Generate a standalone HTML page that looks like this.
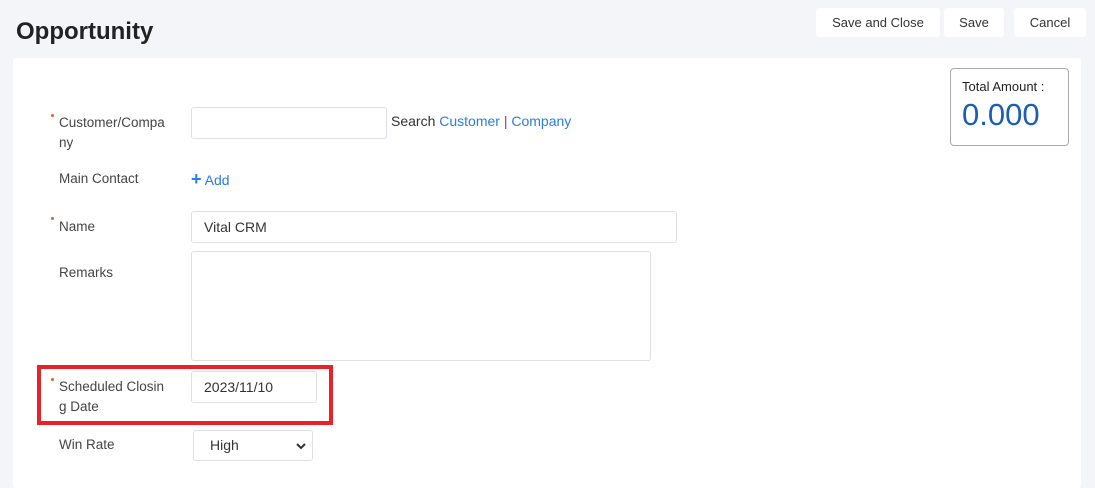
<!DOCTYPE html>
<html><head><style>
body{margin:0;width:1095px;height:474px;background:#f4f5f9;font-family:"Liberation Sans",Arial,sans-serif;position:relative;overflow:hidden;color:#333}
.a{position:absolute}
.btn{position:absolute;top:8px;height:29px;background:#fff;border-radius:3px;font-size:13px;line-height:29px;text-align:center;color:#333}
.lbl{position:absolute;font-size:13.5px;line-height:20px;color:#444;left:59px}
.req{position:absolute;width:3px;height:3px;border-radius:50%;background:#e8601c;left:51px}
.inp{position:absolute;background:#fff;border:1px solid #dcdfe6;border-radius:3px;box-sizing:border-box;font-size:14px;color:#333;padding-left:12px}
</style></head><body>
<div class="a" style="left:16px;top:18px;font-size:24px;font-weight:bold;color:#222">Opportunity</div>
<div class="btn" style="left:816px;width:124px">Save and Close</div>
<div class="btn" style="left:944px;width:60px">Save</div>
<div class="btn" style="left:1014px;width:72px">Cancel</div>
<div class="a" style="left:13px;top:58px;width:1068px;height:430px;background:#fff;border-radius:3px"></div>
<div class="a" style="left:950px;top:68px;width:119px;height:78px;box-sizing:border-box;border:1px solid #aaa;border-radius:4px">
<div class="a" style="left:11px;top:10px;font-size:13px;color:#222">Total Amount :</div>
<div class="a" style="left:11px;top:28px;font-size:31px;color:#1a5fb4">0.000</div></div>
<div class="req" style="top:114px"></div>
<div class="lbl" style="top:113px">Customer/Compa<br>ny</div>
<div class="inp" style="left:191px;top:107px;width:196px;height:32px"></div>
<div class="a" style="left:391px;top:113px;font-size:14px;line-height:16px;color:#333">Search <span style="color:#2a7de1">Customer</span> <span style="color:#8a3a8a">|</span> <span style="color:#2a7de1">Company</span></div>
<div class="lbl" style="top:169px">Main Contact</div>
<div class="a" style="left:191px;top:169px;font-size:14px;line-height:20px;color:#2a7de1"><span style="font-weight:bold;font-size:18px">+</span> Add</div>
<div class="req" style="top:217px"></div>
<div class="lbl" style="top:217px">Name</div>
<div class="inp" style="left:191px;top:211px;width:486px;height:32px;line-height:30px">Vital CRM</div>
<div class="lbl" style="top:263px">Remarks</div>
<div class="inp" style="left:191px;top:251px;width:460px;height:110px"></div>
<div class="a" style="left:37px;top:365px;width:296px;height:60px;box-sizing:border-box;border:4px solid #e8212b"></div>
<div class="req" style="top:378px"></div>
<div class="lbl" style="top:377px">Scheduled Closin<br>g Date</div>
<div class="inp" style="left:191px;top:371px;width:126px;height:32px;line-height:30px">2023/11/10</div>
<div class="lbl" style="top:435px">Win Rate</div>
<div class="inp" style="left:193px;top:430px;width:120px;height:31px;line-height:29px;padding-left:16px">High<svg style="position:absolute;right:6px;top:11px" width="10" height="8" viewBox="0 0 10 8"><path d="M1 2l4 4 4-4" stroke="#333" stroke-width="2" fill="none"/></svg></div>
</body></html>
